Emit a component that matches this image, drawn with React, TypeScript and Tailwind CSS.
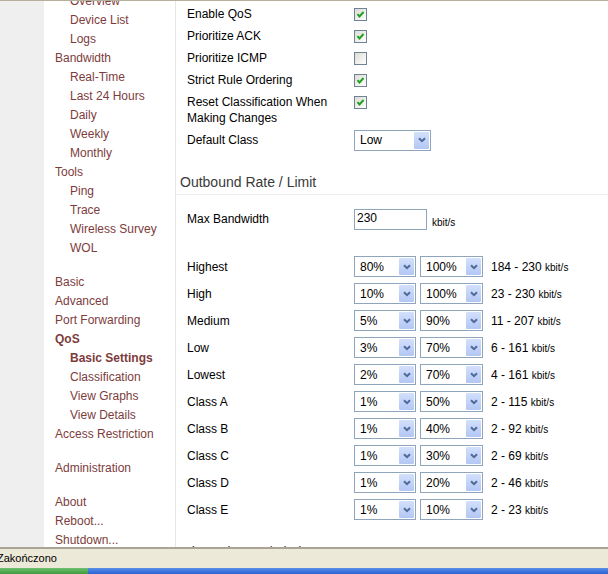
import React from "react";

const font = { fontFamily: '"Liberation Sans", Arial, sans-serif' };

type NavItem = { label: string; sub?: boolean; bold?: boolean; gap?: boolean };

const nav: NavItem[] = [
  { label: "Overview", sub: true },
  { label: "Device List", sub: true },
  { label: "Logs", sub: true },
  { label: "Bandwidth" },
  { label: "Real-Time", sub: true },
  { label: "Last 24 Hours", sub: true },
  { label: "Daily", sub: true },
  { label: "Weekly", sub: true },
  { label: "Monthly", sub: true },
  { label: "Tools" },
  { label: "Ping", sub: true },
  { label: "Trace", sub: true },
  { label: "Wireless Survey", sub: true },
  { label: "WOL", sub: true },
  { label: "Basic", gap: true },
  { label: "Advanced" },
  { label: "Port Forwarding" },
  { label: "QoS", bold: true },
  { label: "Basic Settings", sub: true, bold: true },
  { label: "Classification", sub: true },
  { label: "View Graphs", sub: true },
  { label: "View Details", sub: true },
  { label: "Access Restriction" },
  { label: "Administration", gap: true },
  { label: "About", gap: true },
  { label: "Reboot..." },
  { label: "Shutdown..." },
];

const classes = [
  ["Highest", "80%", "100%", "184 - 230"],
  ["High", "10%", "100%", "23 - 230"],
  ["Medium", "5%", "90%", "11 - 207"],
  ["Low", "3%", "70%", "6 - 161"],
  ["Lowest", "2%", "70%", "4 - 161"],
  ["Class A", "1%", "50%", "2 - 115"],
  ["Class B", "1%", "40%", "2 - 92"],
  ["Class C", "1%", "30%", "2 - 69"],
  ["Class D", "1%", "20%", "2 - 46"],
  ["Class E", "1%", "10%", "2 - 23"],
];

function Checkbox({ checked }: { checked: boolean }) {
  return (
    <span className="mt-[2px] flex h-[13px] w-[13px] shrink-0 items-center justify-center border border-[#6f8296] bg-gradient-to-br from-[#dcdcd4] to-white">
      {checked && (
        <svg width="9" height="9" viewBox="0 0 9 9">
          <polyline points="1.5,4.2 3.5,6.5 7.5,2" fill="none" stroke="#21a121" strokeWidth="2" />
        </svg>
      )}
    </span>
  );
}

function Select({ value, w }: { value: string; w: string }) {
  return (
    <div className={`flex h-[21px] items-center justify-between border border-[#8fa5bb] bg-white pl-[5px] pr-px text-[12px] text-black ${w}`}>
      <span>{value}</span>
      <span className="flex h-[17px] w-[15px] items-center justify-center rounded-[1px] bg-gradient-to-b from-[#d3e0fc] to-[#b3c7f4]">
        <svg width="8" height="6" viewBox="0 0 8 6">
          <polyline points="1,1.2 4,4.2 7,1.2" fill="none" stroke="#4d6a9a" strokeWidth="2" />
        </svg>
      </span>
    </div>
  );
}

function CheckRow({ label, checked }: { label: React.ReactNode; checked: boolean }) {
  return (
    <div className="flex items-start py-[3px] leading-4">
      <div className="w-[167px]">{label}</div>
      <Checkbox checked={checked} />
    </div>
  );
}

export default function App() {
  return (
    <div className="flex h-[574px] w-[608px] flex-col overflow-hidden bg-white text-[12px] text-black" style={font}>
      <div className="h-px bg-[#b5b09c]" />

      <div className="flex min-h-0 flex-1 overflow-hidden">
        {/* outer page margin */}
        <div className="w-[44px] shrink-0 bg-[#efefef]" />

        {/* navigation */}
        <div className="w-[132px] shrink-0 border-r border-[#e6e6e6] bg-white">
          <ul className="-mt-[9px] pl-[11px] text-[#7d3c3c]">
            {nav.map((n) => (
              <li
                key={n.label}
                className={`h-[19px] leading-[19px] ${n.sub ? "pl-[15px]" : ""} ${n.bold ? "font-bold" : ""} ${n.gap ? "mt-[15px]" : ""}`}
              >
                {n.label}
              </li>
            ))}
          </ul>
        </div>

        {/* content */}
        <div className="min-w-0 flex-1 pt-[2px]">
          <div className="pl-[11px]">
            <CheckRow label="Enable QoS" checked />
            <CheckRow label="Prioritize ACK" checked />
            <CheckRow label="Prioritize ICMP" checked={false} />
            <CheckRow label="Strict Rule Ordering" checked />
            <CheckRow label={<>Reset Classification When<br />Making Changes</>} checked />
            <div className="flex h-[22px] items-center">
              <div className="w-[167px]">Default Class</div>
              <Select value="Low" w="w-[77px]" />
            </div>
          </div>

          <div className="mt-[22px] border-b border-[#ececec] pb-[3px] pl-[4px] text-[14px] leading-[18px] text-[#3a3a3a]">
            Outbound Rate / Limit
          </div>

          <div className="pl-[11px]">
            <div className="mt-[13px] flex h-[22px] items-center">
              <div className="w-[167px]">Max Bandwidth</div>
              <div className="h-[21px] w-[73px] border border-[#8fa5bb] pl-[2px] leading-[17px]">230</div>
              <span className="ml-[5px] pt-[7px] text-[10px]">kbit/s</span>
            </div>

            <div className="mt-[23px]">
              {classes.map(([name, lo, hi, range]) => (
                <div key={name} className="flex h-[27px] items-center">
                  <div className="w-[167px]">{name}</div>
                  <Select value={lo} w="w-[62px]" />
                  <div className="w-[4px]" />
                  <Select value={hi} w="w-[63px]" />
                  <span className="ml-[8px]">
                    {range} <span className="text-[10px]">kbit/s</span>
                  </span>
                </div>
              ))}
            </div>
          </div>

          <div className="mt-[20px] pl-[4px] text-[14px] leading-[18px] text-[#3a3a3a]">Inbound Rate / Limit</div>
        </div>
      </div>

      {/* status bar */}
      <div className="h-[2px] bg-[#a9a493]" />
      <div className="flex h-[19px] items-center bg-[#ece9d8] pl-0 text-[11px]">
        <span className="-ml-[3px]">Zakończono</span>
      </div>

      {/* taskbar */}
      <div className="flex h-[6px]">
        <div className="w-[88px] bg-gradient-to-b from-[#6fbf6f] to-[#3c9a3c]" />
        <div className="flex-1 bg-gradient-to-b from-[#5a8ee8] to-[#2a62d3]" />
      </div>
    </div>
  );
}
